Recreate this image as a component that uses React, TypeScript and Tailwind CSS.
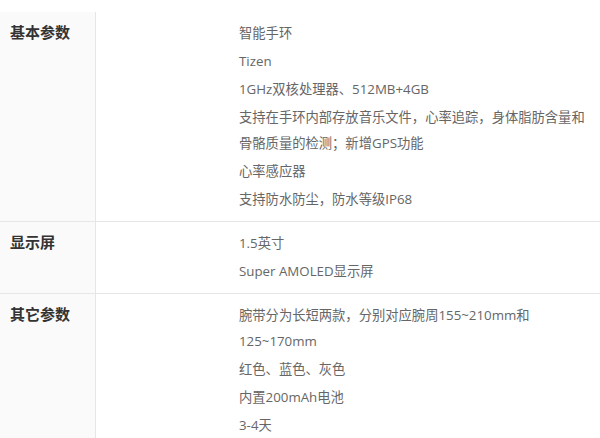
import React from "react";

const sections: { title: string; items: React.ReactNode[] }[] = [
  {
    title: "基本参数",
    items: [
      "智能手环",
      "Tizen",
      "1GHz双核处理器、512MB+4GB",
      <>
        支持在手环内部存放音乐文件，心率追踪，身体脂肪含量和
        <br />
        骨骼质量的检测；新增GPS功能
      </>,
      "心率感应器",
      "支持防水防尘，防水等级IP68",
    ],
  },
  {
    title: "显示屏",
    items: ["1.5英寸", "Super AMOLED显示屏"],
  },
  {
    title: "其它参数",
    items: [
      <>
        腕带分为长短两款，分别对应腕周155~210mm和
        <br />
        125~170mm
      </>,
      "红色、蓝色、灰色",
      "内置200mAh电池",
      "3-4天",
    ],
  },
];

export default function App() {
  return (
    <div
      className="w-[600px] h-[438px] overflow-hidden bg-white pt-[12px]"
      style={{ fontFamily: '"Open Sans", "Noto Sans CJK SC", sans-serif' }}
    >
      {sections.map((s, i) => (
        <div
          key={i}
          className={`flex ${i < sections.length - 1 ? "border-b border-[#e6e6e6]" : ""}`}
        >
          <div className="w-[96px] shrink-0 bg-[#fafafa] border-r border-[#e6e6e6] pl-[10px] pt-[9px]">
            <div
              className="text-[15px] font-bold text-[#333] leading-[22px]"
              style={{ fontFamily: '"Noto Sans CJK SC", sans-serif' }}
            >
              {s.title}
            </div>
          </div>
          <div className="flex-1 pl-[143px] pt-[8px] pb-[9px] flex flex-col gap-[2px]">
            {s.items.map((it, j) => (
              <p
                key={j}
                className="text-[13.3px] leading-[26px] text-[#666] whitespace-nowrap"
              >
                {it}
              </p>
            ))}
          </div>
        </div>
      ))}
    </div>
  );
}
